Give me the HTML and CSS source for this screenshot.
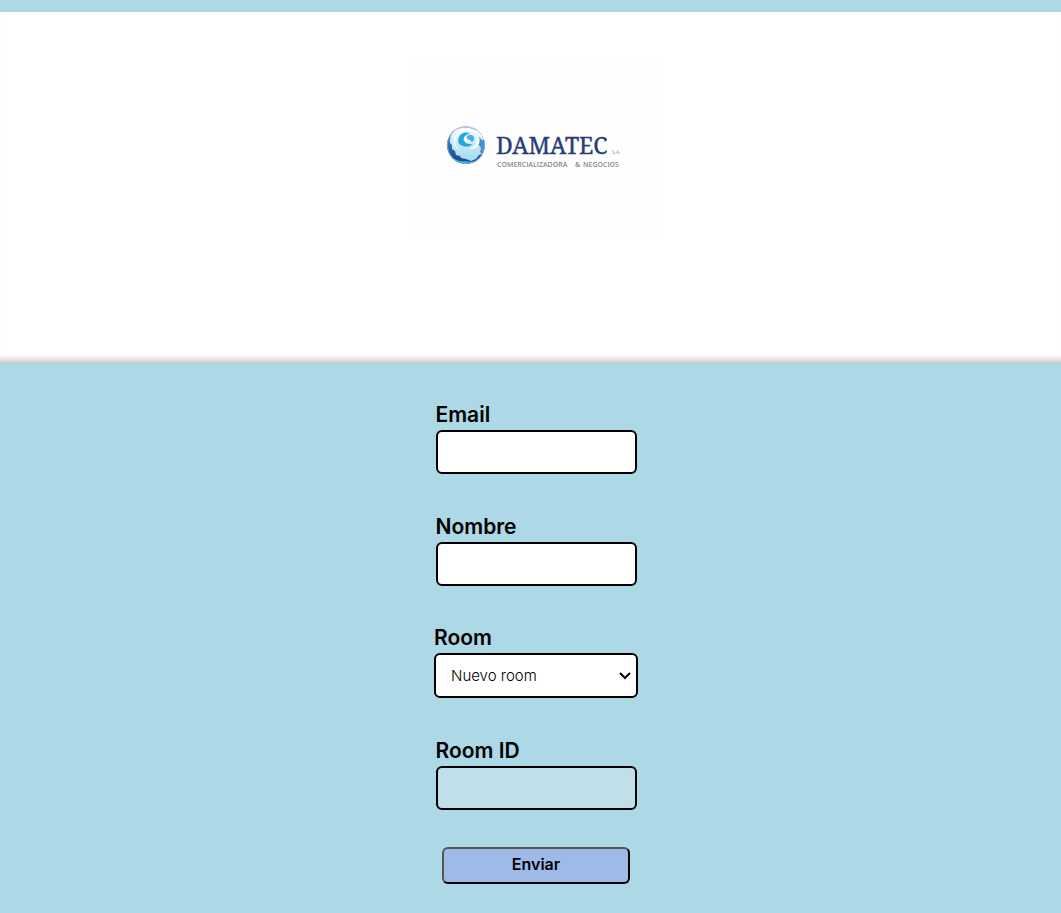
FILE: index.html
```html
<!DOCTYPE html>
<html lang="es">
<head>
<meta charset="utf-8">
<title>Damatec</title>
<meta name="viewport" content="width=device-width, initial-scale=1">
<link rel="stylesheet" href="styles.css">
</head>
<body>
<header class="banner">
  <svg class="logo" viewBox="0 0 248 174" role="img" aria-label="Damatec S.A. Comercializadora y Negocios">
    <defs>
      <linearGradient id="globe" x1="0" y1="0" x2="0" y2="1">
        <stop offset="0" stop-color="#f4fafe"/>
        <stop offset=".45" stop-color="#cdebf8"/>
        <stop offset="1" stop-color="#9ad3ef"/>
      </linearGradient>
      <linearGradient id="shade" x1="0" y1="0" x2="0" y2="1">
        <stop offset="0" stop-color="#9dbfe0"/>
        <stop offset=".4" stop-color="#2f74b5"/>
        <stop offset="1" stop-color="#163f83"/>
      </linearGradient>
      <clipPath id="disc"><circle cx="54" cy="83" r="19"/></clipPath>
    </defs>
    <rect class="logo-card" width="248" height="174" rx="2"/>
    <g clip-path="url(#disc)">
      <circle cx="54" cy="83" r="19" fill="url(#globe)"/>
      <path d="M46 65Q37 72 38 81L40 83L40 87L43 89L44 93L48 94L49 96L54 97L59 99L64 97L67 93L70 92L70 97L55 104L40 99L33 84L37 70Z" fill="url(#shade)"/>
      <path d="M39 95Q46 100 53 99Q60 101 66 98L60 103Q47 105 39 95Z" fill="#35b4e6"/>
      <path d="M67 75L70 78L73 78L73 91L70 93L68 90L69 86L66 82Z" fill="#4b8fc8"/>
      <path d="M42 75Q48 65 58 66Q67 67 71 76L66 73Q60 68 53 69Q46 71 43 79Q43 85 48 89Q41 86 42 75Z" fill="#fff"/>
      <path d="M59 70Q65 72 65 78Q64 85 57 87Q64 88 67 82Q69 76 64 72Z" fill="#fff"/>
      <path d="M58 71Q50 69 47 75Q44 82 51 84Q57 86 61 82Q55 83 52 79Q50 74 58 71Z" fill="#24a5df"/>
      <path d="M55 74Q59 71 62 75Q63 78 60 80Q58 77 55 77Z" fill="#3fb3e4"/>
      <path d="M53 75Q51 79 55 80Q58 81 59 79Q55 79 55 77Z" fill="#fff"/>
      <path d="M38 71Q49 61 65 68" fill="none" stroke="#a5c3e0" stroke-width="1"/>
      <circle cx="54" cy="83" r="18.6" fill="none" stroke="#8db4da" stroke-width=".8"/>
    </g>
    <text class="logo-name" x="84" y="92">DAMATEC</text>
    <text class="logo-sa" x="200" y="92">S.A.</text>
    <text class="logo-tag" x="85" y="105">COMERCIALIZADORA</text>
    <text class="logo-tag" x="163" y="105">&amp;</text>
    <text class="logo-tag" x="171" y="105">NEGOCIOS</text>
  </svg>
</header>
<main>
  <form class="form">
    <div class="field">
      <label for="email">Email</label>
      <input class="control" id="email" type="email">
    </div>
    <div class="field">
      <label for="nombre">Nombre</label>
      <input class="control" id="nombre" type="text">
    </div>
    <div class="field field-select">
      <label for="room">Room</label>
      <div class="select-wrap">
        <select class="control" id="room"><option>Nuevo room</option></select>
        <svg class="chevron" viewBox="0 0 12 8" aria-hidden="true"><path d="M1 1L6 6L11 1"/></svg>
      </div>
    </div>
    <div class="field">
      <label for="room-id">Room ID</label>
      <input class="control" id="room-id" type="text" disabled>
    </div>
    <button class="submit" type="submit">Enviar</button>
  </form>
</main>
</body>
</html>
```
FILE: styles.css
```css
* { box-sizing: border-box; }

body {
  margin: 0;
  padding-top: 12px;
  background: #add8e6;
  color: #000;
  font-family: Inter, "Liberation Sans", sans-serif;
}

.banner {
  display: flex;
  justify-content: center;
  padding: 50px 0 127px 11px;
  background: #fff;
  box-shadow: inset 0 -10px 8px -8px #b8b3b3;
}

.logo { width: 248px; height: 174px; }
.logo-card { fill: #fefefe; }
.logo-name { font: 23px "Noto Serif", "DejaVu Serif Condensed", "Liberation Serif", serif; fill: #283c7c; stroke: #283c7c; stroke-width: .4px; }
.logo-sa { font: 5px "Open Sans", sans-serif; fill: #999; }
.logo-tag { font: 600 7px "Open Sans", sans-serif; fill: #888; }

.form {
  display: flex;
  flex-direction: column;
  align-items: center;
  padding: 37px 0 29px 11px;
}

.field {
  display: flex;
  flex-direction: column;
  width: 201px;
  margin-bottom: 37px;
}

.field + .field { padding-top: 1px; }

.field-select { width: 204px; }
.field + .field-select { padding-top: 0; }

label {
  font-size: 21px;
  font-weight: 600;
  line-height: 30px;
}

.control {
  width: 100%;
  height: 44px;
  padding: 0 15px;
  border: 2px solid #000;
  border-radius: 6px;
  background: #fff;
  color: #000;
  font: 300 15px Inter, "Liberation Sans", sans-serif;
}

.control:disabled { background: #c1dfe9; }

.select-wrap { position: relative; }
select.control { display: block; height: 45px; appearance: none; }

.chevron {
  position: absolute;
  top: 19px;
  right: 7px;
  width: 12px;
  height: 8px;
  fill: none;
  stroke: #000;
  stroke-width: 2;
  pointer-events: none;
}

.submit {
  width: 188px;
  height: 37px;
  padding: 0 0 4px;
  border: 2px solid;
  border-color: #555 #000 #000 #555;
  border-radius: 6px;
  background: #9dbae8;
  color: #000;
  font: 600 16px Inter, "Liberation Sans", sans-serif;
}
```
